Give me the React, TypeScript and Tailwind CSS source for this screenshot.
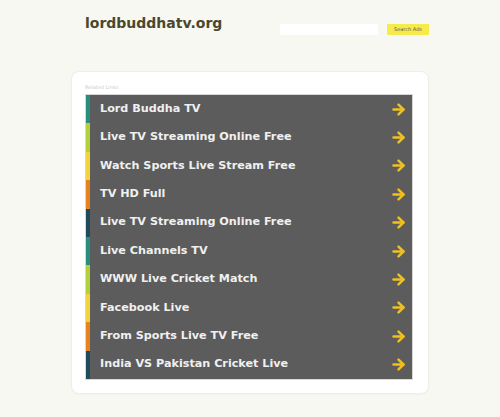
import { ArrowRight } from "lucide-react"

const links = [
  { label: "Lord Buddha TV", bar: "border-[#2a8c7c]" },
  { label: "Live TV Streaming Online Free", bar: "border-[#b4cf3c]" },
  { label: "Watch Sports Live Stream Free", bar: "border-[#f2d33a]" },
  { label: "TV HD Full", bar: "border-[#e8821e]" },
  { label: "Live TV Streaming Online Free", bar: "border-[#1f4b5c]" },
  { label: "Live Channels TV", bar: "border-[#2a8c7c]" },
  { label: "WWW Live Cricket Match", bar: "border-[#b4cf3c]" },
  { label: "Facebook Live", bar: "border-[#f2d33a]" },
  { label: "From Sports Live TV Free", bar: "border-[#e8821e]" },
  { label: "India VS Pakistan Cricket Live", bar: "border-[#1f4b5c]" },
]

export default function App() {
  return (
    <div className="min-h-[417px] w-[500px] bg-[#f8f8f2] font-['DejaVu_Sans',sans-serif]">
      {/* header */}
      <div className="flex items-start justify-between pl-[85px] pr-[71px] pt-[13px]">
        <h1 className="text-[14px] font-bold leading-[20px] text-[#4a482c]">
          lordbuddhatv.org
        </h1>
        <div className="mt-[11px] flex items-center gap-[9px]">
          <div className="h-[11px] w-[98px] bg-white" />
          <button className="h-[11px] w-[42px] bg-[#f5ec4c] text-[5px] leading-[11px] text-[#555]">
            Search Ads
          </button>
        </div>
      </div>

      {/* card */}
      <div className="mx-[71px] mt-[36px] rounded-[8px] border border-[#efefe6] bg-white pb-[13px] pl-[13px] pr-[15px] pt-[12px] shadow-[0_1px_2px_rgba(0,0,0,0.03)]">
        <div className="h-[10px] text-[5px] leading-[6px] text-[#ccc]">Related Links</div>
        <ul className="border border-[#d8d8d8] bg-[#5c5c5c]">
          {links.map((l, i) => (
            <li
              key={i}
              className={`flex h-[28.4px] items-center justify-between border-l-[4px] pl-[10px] pr-[5px] ${l.bar}`}
            >
              <span className="text-[11.2px] font-bold text-[#f0f0f0]">{l.label}</span>
              <ArrowRight className="h-[17px] w-[17px] text-[#f0c020]" strokeWidth={3.5} />
            </li>
          ))}
        </ul>
      </div>
    </div>
  )
}
